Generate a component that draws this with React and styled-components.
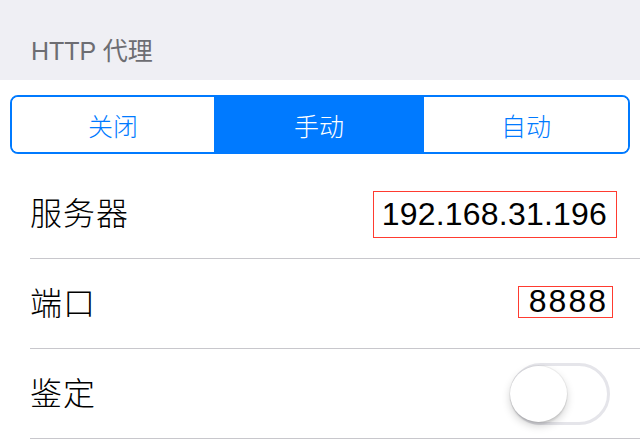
import React from "react";
import styled, { createGlobalStyle } from "styled-components";

const GlobalStyle = createGlobalStyle`
  html, body {
    margin: 0;
    padding: 0;
    background: #ffffff;
  }
  body {
    font-family: "Liberation Sans", "Noto Sans CJK SC", sans-serif;
  }
`;

const Page = styled.div`
  width: 640px;
  height: 441px;
  overflow: hidden;
  background: #ffffff;
`;

const SectionHeader = styled.div`
  height: 80px;
  box-sizing: border-box;
  padding: 36px 0 0 31px;
  background: #efeff4;
  color: #6d6d72;
  font-size: 25px;
  line-height: 30px;
`;

const SegmentWrap = styled.div`
  padding: 15px 10px;
`;

const Segmented = styled.div`
  display: grid;
  grid-template-columns: 202px 210px 1fr;
  height: 59px;
  box-sizing: border-box;
  border: 2px solid #007aff;
  border-radius: 8px;
  overflow: hidden;
`;

const Segment = styled.div`
  display: flex;
  align-items: center;
  justify-content: center;
  font-size: 25px;
  font-weight: 300;
  color: ${(p) => (p.$active ? "#ffffff" : "#007aff")};
  background: ${(p) => (p.$active ? "#007aff" : "#ffffff")};
`;

const Row = styled.div`
  display: flex;
  align-items: center;
  justify-content: space-between;
  height: 90px;
  margin-left: 30px;
  padding-right: ${(p) => p.$right}px;
  box-sizing: border-box;
  border-bottom: 1px solid #c8c7cc;
`;

const Label = styled.span`
  font-size: 32px;
  font-weight: 300;
  color: #000000;
  line-height: 1;
  letter-spacing: 1px;
`;

const ValueBox = styled.span`
  display: flex;
  align-items: center;
  height: ${(p) => p.$h}px;
  box-sizing: border-box;
  padding: 0 ${(p) => p.$pr}px 0 ${(p) => p.$pl}px;
  margin-top: ${(p) => p.$shift}px;
  border: 1px solid #ff3b30;
  font-size: 32px;
  letter-spacing: ${(p) => p.$ls}px;
  color: #000000;
`;

const Switch = styled.div`
  position: relative;
  width: 100px;
  height: 62px;
  box-sizing: border-box;
  border: 3px solid #e5e5ea;
  border-radius: 31px;
  background: #ffffff;
`;

const Knob = styled.div`
  position: absolute;
  left: -3px;
  top: 0px;
  width: 57px;
  height: 56px;
  border-radius: 50%;
  background: #ffffff;
  box-shadow: 0 0 0 1px rgba(0, 0, 0, 0.05), 0 4px 8px rgba(0, 0, 0, 0.18),
    0 3px 1px rgba(0, 0, 0, 0.06);
`;

const modes = ["关闭", "手动", "自动"];

export default function App() {
  return (
    <Page>
      <GlobalStyle />
      <SectionHeader>HTTP 代理</SectionHeader>
      <SegmentWrap>
        <Segmented>
          {modes.map((m) => (
            <Segment key={m} $active={m === "手动"}>
              {m}
            </Segment>
          ))}
        </Segmented>
      </SegmentWrap>
      <Row $right={23}>
        <Label>服务器</Label>
        <ValueBox $h={47} $pl={8} $pr={9} $ls={0.2} $shift={1}>
          192.168.31.196
        </ValueBox>
      </Row>
      <Row $right={27}>
        <Label>端口</Label>
        <ValueBox $h={32} $pl={10} $pr={4} $ls={2} $shift={-4}>
          8888
        </ValueBox>
      </Row>
      <Row $right={30}>
        <Label>鉴定</Label>
        <Switch>
          <Knob />
        </Switch>
      </Row>
    </Page>
  );
}
